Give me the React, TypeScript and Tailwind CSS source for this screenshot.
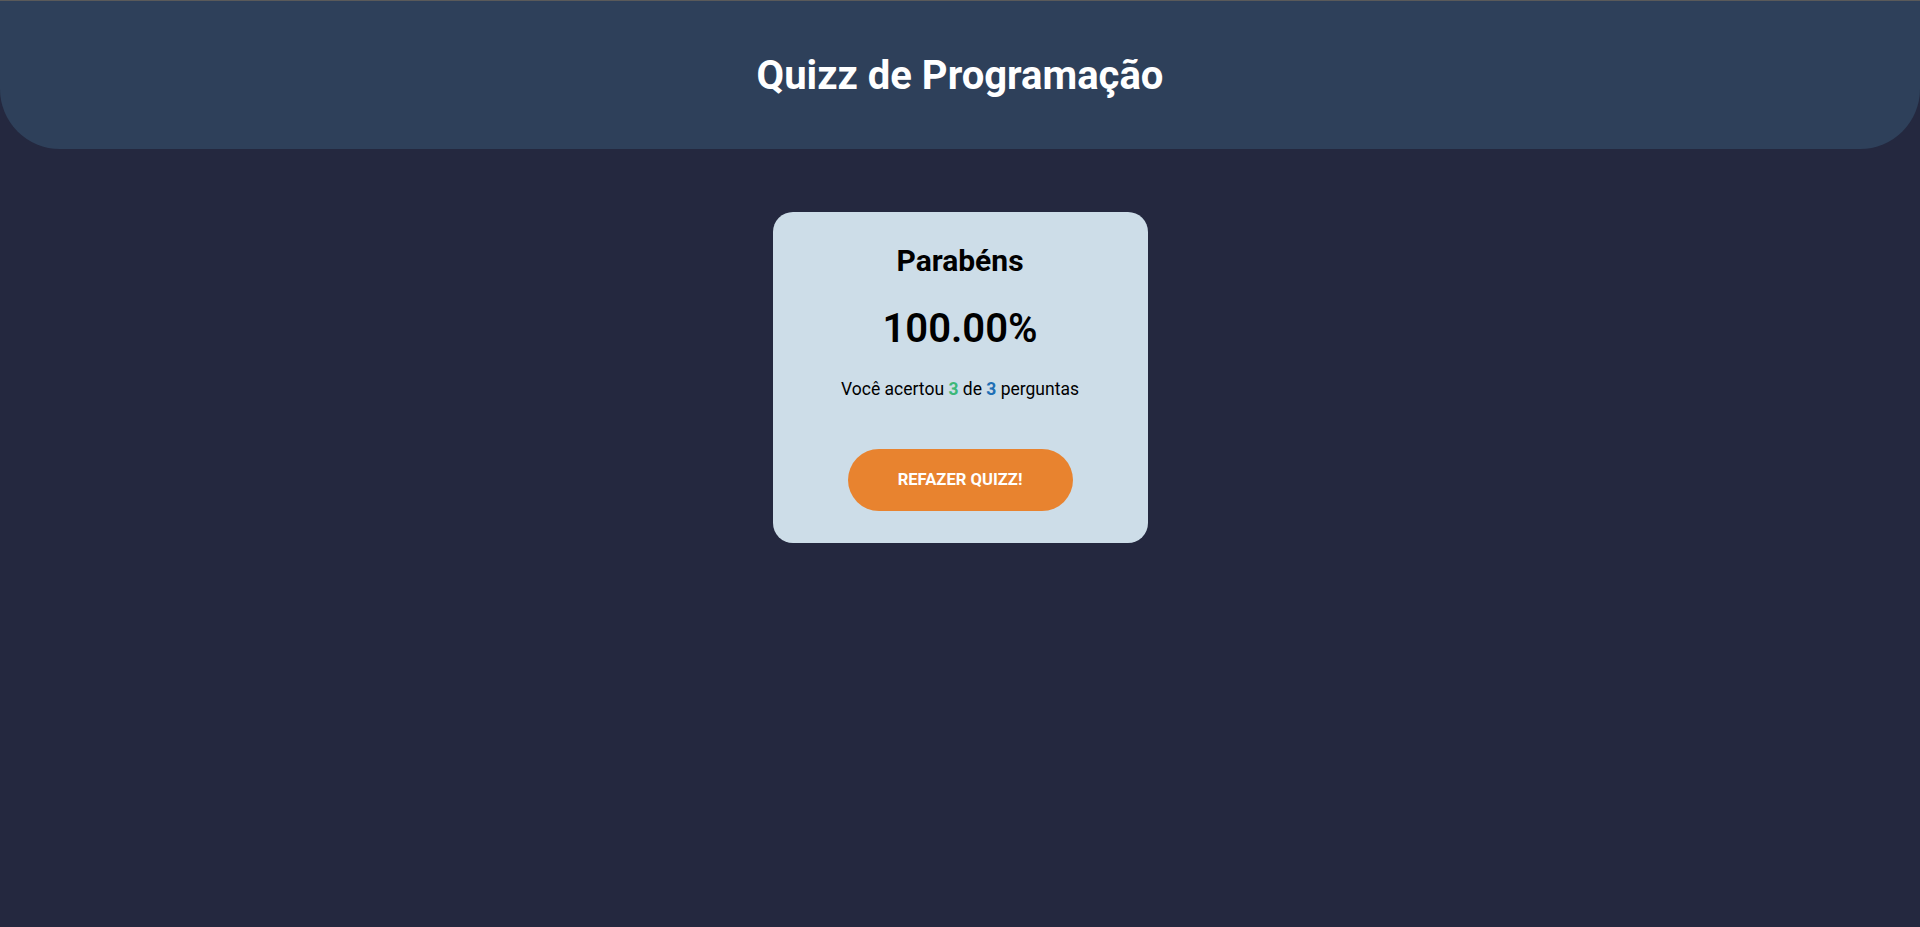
import React from "react";

export default function App() {
  return (
    <div
      className="min-h-[927px] w-full bg-[#24283f] border-t border-[#5a5a5a]"
      style={{ fontFamily: "Roboto, 'Liberation Sans', sans-serif" }}
    >
      <header className="h-[148px] w-full bg-[#2e405a] rounded-b-[60px] flex items-center justify-center">
        <h1 className="text-white font-bold text-[40px] leading-none mt-[2px]">Quizz de Programação</h1>
      </header>
      <main className="flex justify-center pt-[63px]">
        <div className="w-[375px] h-[331px] bg-[#cddde8] rounded-[20px] flex flex-col items-center pt-[31px]">
          <h2 className="text-black font-bold text-[30px] leading-[35px]">Parabéns</h2>
          <div className="mt-[27px] text-black font-semibold text-[40px] leading-[47px]">100.00%</div>
          <p className="mt-[27px] text-black text-[17.5px] leading-[20px]">
            Você acertou <span className="font-bold text-[#3cb878]">3</span> de{" "}
            <span className="font-bold text-[#1f6fb5]">3</span> perguntas
          </p>
          <button className="mt-[50px] w-[225px] h-[62px] rounded-full bg-[#e8832f] text-white font-bold text-[16.6px] uppercase">
            Refazer quizz!
          </button>
        </div>
      </main>
    </div>
  );
}
